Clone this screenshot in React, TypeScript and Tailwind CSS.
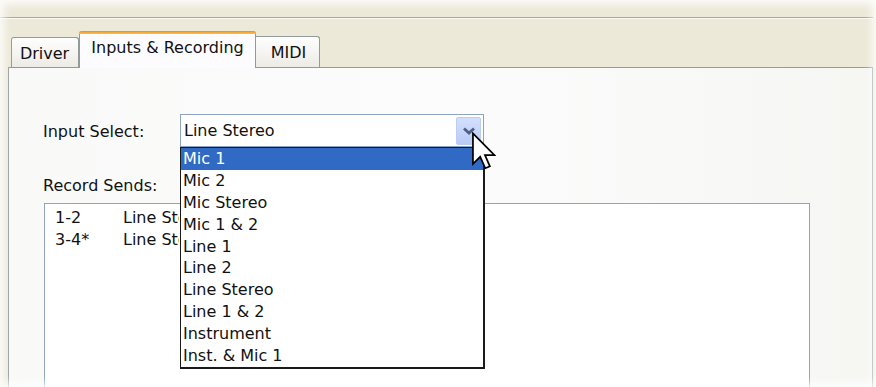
import React from "react";

const items = [
  "Mic 1",
  "Mic 2",
  "Mic Stereo",
  "Mic 1 & 2",
  "Line 1",
  "Line 2",
  "Line Stereo",
  "Line 1 & 2",
  "Instrument",
  "Inst. & Mic 1",
];

function Cursor() {
  return (
    <svg width="24" height="38" viewBox="0 0 12.6 19.5" className="block">
      <path
        d="M0.5 0.5 L0.5 16.5 L4.3 12.8 L7 18.8 L9.4 17.8 L6.8 11.9 L11.8 11.9 Z"
        fill="#fff"
        stroke="#000"
        strokeWidth="0.9"
        strokeLinejoin="miter"
      />
    </svg>
  );
}

export default function App() {
  return (
    <div className="relative w-[876px] h-[387px] overflow-hidden bg-[#ECE9D8] text-[16px] text-[#111] [font-family:'DejaVu_Sans',sans-serif] flex flex-col">
      {/* top separator */}
      <div className="h-[17px] shrink-0" />
      <div className="h-px shrink-0 bg-[#a9a898] mr-[3px]" />
      <div className="h-px shrink-0 bg-[#fbfaf3] mr-[3px]" />

      {/* tabs */}
      <div className="h-[48px] shrink-0 flex items-end pl-[11px]">
        <div className="w-[68px] h-[30px] border border-b-0 border-[#919B9C] rounded-t-[3px] bg-linear-to-b from-[#fefefe] to-[#ecebe5] flex items-center justify-center pr-[1px] leading-none pt-[2px]">
          Driver
        </div>
        <div className="relative z-10 -mb-px w-[177px] h-[37px] border-x border-[#919B9C] rounded-t-[3px] bg-[#fcfcfe] flex flex-col">
          <div className="h-[3px] -mx-px rounded-t-[3px] bg-linear-to-b from-[#e68b2c] to-[#ffc73c]" />
          <div className="flex-1 flex items-center justify-center leading-none pb-[6px]">
            Inputs &amp; Recording
          </div>
        </div>
        <div className="w-[64px] h-[31px] border border-b-0 border-l-0 border-[#919B9C] rounded-tr-[3px] bg-linear-to-b from-[#fefefe] to-[#ecebe5] flex items-center justify-center leading-none pt-[2px] pl-[2px]">
          MIDI
        </div>
      </div>

      {/* panel */}
      <div className="ml-[8px] w-[865px] flex-1 border border-b-0 border-[#919B9C] bg-linear-to-r from-[#f9f9f8] via-[#fcfcfd] to-[#f6f6f3] pl-[33px] pt-[46px] flex flex-col min-h-0">
        <div className="flex items-center h-[33px] shrink-0">
          <div className="w-[138px] leading-none pl-[1px] pt-[2px]">Input Select:</div>
          <div className="w-[304px] h-[33px] border border-[#8da5c2] bg-white flex items-center">
            <div className="flex-1 pl-[3px] leading-none pt-[1px]">Line Stereo</div>
            <div className="w-[25px] h-[28px] mr-[2px] rounded-[2px] border border-[#bccdf4] bg-linear-to-b from-[#d3dffc] to-[#b9cbf6] flex items-center justify-center">
              <svg width="14" height="10" viewBox="0 0 14 10">
                <path d="M2 2.5 L7 7 L12 2.5" fill="none" stroke="#4d6185" strokeWidth="2.8" />
              </svg>
            </div>
          </div>
        </div>

        <div className="mt-[29px] h-[20px] leading-[20px] shrink-0 pl-[1px]">Record Sends:</div>

        <div className="mt-[7px] ml-[2px] w-[766px] flex-1 border border-b-0 border-[#8da5c2] bg-white pt-[3px] pl-[10px]">
          <div className="flex h-[22px] items-center">
            <div className="w-[68px]">1-2</div>
            <div className="w-[56px] overflow-hidden whitespace-nowrap">Line Stereo</div>
          </div>
          <div className="flex h-[22px] items-center">
            <div className="w-[68px]">3-4*</div>
            <div className="w-[56px] overflow-hidden whitespace-nowrap">Line Stereo</div>
          </div>
        </div>
      </div>

      {/* open dropdown list */}
      <div className="absolute left-[180px] top-[147px] w-[305px] h-[222px] border border-r-2 border-b-2 border-[#1a1a1a] bg-white z-20 flex flex-col">
        {items.map((it, i) => (
          <div
            key={it}
            className={
              i === 0
                ? "h-[21.9px] flex items-center pl-[2px] bg-[#316ac5] text-white leading-none"
                : "h-[21.9px] flex items-center pl-[2px] leading-none"
            }
          >
            {it}
          </div>
        ))}
      </div>

      {/* mouse cursor */}
      <div className="absolute left-[472px] top-[132px] z-30">
        <Cursor />
      </div>

      {/* soft edge vignette */}
      <div className="pointer-events-none absolute inset-0 z-40 shadow-[inset_0_0_9px_4px_rgba(255,255,255,0.85)]" />
    </div>
  );
}
